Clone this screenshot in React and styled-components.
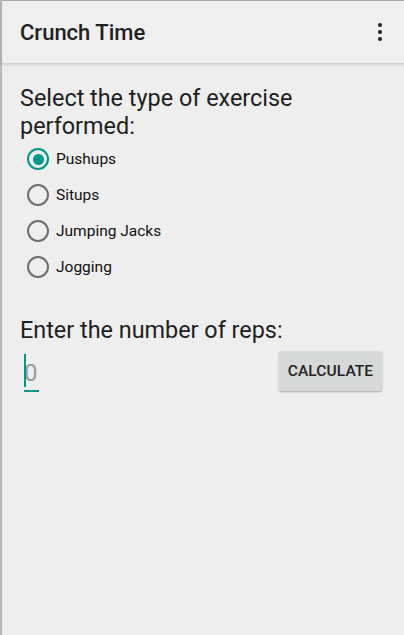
import React, { useState } from 'react';
import styled, { createGlobalStyle } from 'styled-components';

const GlobalStyle = createGlobalStyle`
  html, body {
    margin: 0;
    padding: 0;
    background: #eeeeee;
    font-family: Roboto, "Noto Sans", sans-serif;
  }
`;

const Screen = styled.div`
  width: 404px;
  height: 635px;
  display: flex;
  background: #eeeeee;
  overflow: hidden;
`;

const EdgeStrip = styled.div`
  width: 2px;
  flex-shrink: 0;
  background: #b9b9b9;
`;

const Window = styled.div`
  flex: 1;
  display: flex;
  flex-direction: column;
  border-top: 1px solid #a8a8a8;
`;

const AppBar = styled.div`
  height: 62px;
  display: flex;
  align-items: center;
  justify-content: space-between;
  padding: 0 20px 0 18px;
  background: #efefef;
  box-shadow: 0 1px 0 #d2d2d2, 0 2px 3px rgba(0, 0, 0, 0.14);
  position: relative;
  z-index: 1;
`;

const Title = styled.div`
  font-size: 22px;
  font-weight: 500;
  color: #212121;
  margin-top: 1px;
`;

const MenuButton = styled.div`
  display: flex;
  flex-direction: column;
  gap: 3px;
  padding: 4px 2px;
`;

const Dot = styled.span`
  width: 4px;
  height: 4px;
  border-radius: 50%;
  background: #222;
`;

const Content = styled.div`
  padding: 21px 18px 0 18px;
  display: flex;
  flex-direction: column;
`;

const Prompt = styled.div`
  font-size: 23.4px;
  line-height: 28px;
  color: #1e1e1e;
`;

const RadioList = styled.div`
  display: flex;
  flex-direction: column;
  margin: 1px 0 0 7px;
`;

const RadioRow = styled.label`
  height: 36px;
  display: flex;
  align-items: center;
  gap: 7px;
  cursor: pointer;
  font-size: 15.5px;
  color: #111;
`;

const RadioCircle = styled.span`
  width: 18px;
  height: 18px;
  border-radius: 50%;
  border: 2px solid ${(p) => (p.checked ? '#009688' : '#6d6d6d')};
  display: flex;
  align-items: center;
  justify-content: center;

  &::after {
    content: '';
    width: 11px;
    height: 11px;
    border-radius: 50%;
    background: #009688;
    display: ${(p) => (p.checked ? 'block' : 'none')};
  }
`;

const RepsPrompt = styled(Prompt)`
  margin-top: 31px;
`;

const InputRow = styled.div`
  display: flex;
  align-items: center;
  justify-content: space-between;
  margin-top: 7px;
`;

const RepsField = styled.div`
  position: relative;
  display: flex;
  align-items: center;
  height: 40px;
  padding: 4px 0 0 4px;
  box-sizing: border-box;
  font-size: 24px;
  color: #9a9a9a;

  &::before {
    content: '';
    position: absolute;
    left: 4px;
    top: 3px;
    width: 2px;
    height: 33px;
    background: #009688;
  }

  &::after {
    content: '';
    position: absolute;
    left: 4px;
    bottom: -1px;
    width: 15px;
    height: 2px;
    background: #009688;
  }
`;

const CalcButton = styled.button`
  width: 103px;
  height: 40px;
  margin-right: 4px;
  border: none;
  border-radius: 2px;
  background: #d7d8d8;
  box-shadow: 0 1px 2px rgba(0, 0, 0, 0.3);
  font-family: Roboto, sans-serif;
  font-size: 15.5px;
  font-weight: 500;
  color: #222;
  letter-spacing: 0.1px;
  padding: 0;
`;

const exercises = ['Pushups', 'Situps', 'Jumping Jacks', 'Jogging'];

export default function App() {
  const [selected, setSelected] = useState('Pushups');

  return (
    <Screen>
      <GlobalStyle />
      <EdgeStrip />
      <Window>
        <AppBar>
          <Title>Crunch Time</Title>
          <MenuButton>
            <Dot />
            <Dot />
            <Dot />
          </MenuButton>
        </AppBar>
        <Content>
          <Prompt>Select the type of exercise performed:</Prompt>
          <RadioList>
            {exercises.map((name) => (
              <RadioRow key={name} onClick={() => setSelected(name)}>
                <RadioCircle checked={selected === name} />
                {name}
              </RadioRow>
            ))}
          </RadioList>
          <RepsPrompt>Enter the number of reps:</RepsPrompt>
          <InputRow>
            <RepsField>0</RepsField>
            <CalcButton>CALCULATE</CalcButton>
          </InputRow>
        </Content>
      </Window>
    </Screen>
  );
}
